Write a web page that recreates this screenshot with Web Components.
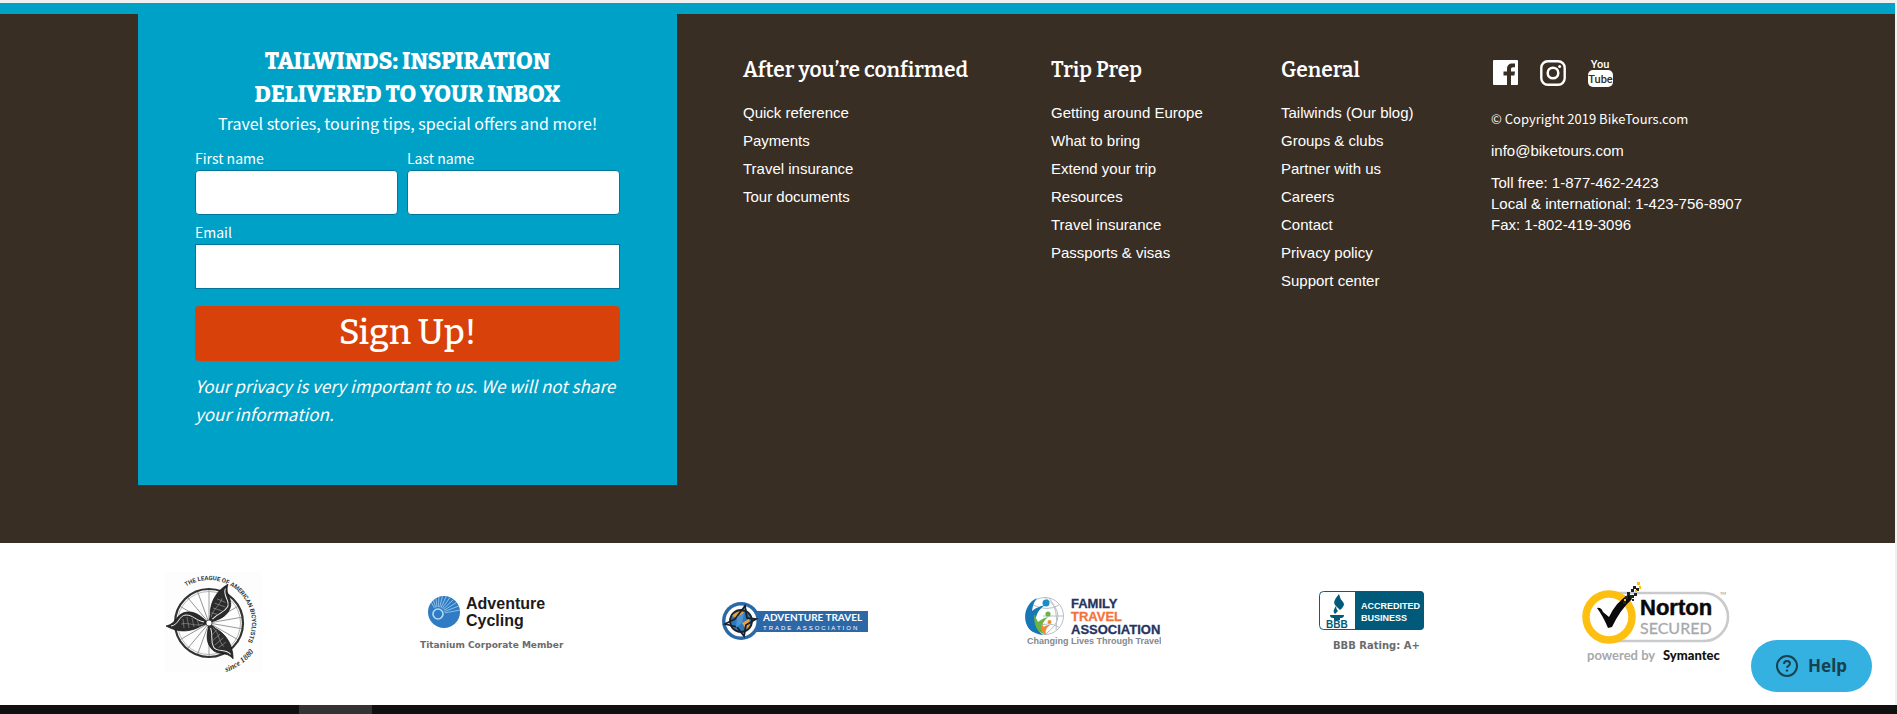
<!DOCTYPE html>
<html lang="en">
<head>
<meta charset="utf-8">
<title>BikeTours.com</title>
<style>
  body { margin: 0; font-family: "Liberation Sans", Arial, sans-serif; background: #fff; }
</style>
</head>
<body>
<bt-page>
  <bt-signup slot="signup"></bt-signup>
  <bt-links slot="links" heading="After you’re confirmed">
    <a href="#quick">Quick reference</a><a href="#payments">Payments</a><a href="#insurance">Travel insurance</a><a href="#documents">Tour documents</a>
  </bt-links>
  <bt-links slot="links" heading="Trip Prep">
    <a href="#europe">Getting around Europe</a><a href="#bring">What to bring</a><a href="#extend">Extend your trip</a><a href="#resources">Resources</a><a href="#insurance">Travel insurance</a><a href="#visas">Passports &amp; visas</a>
  </bt-links>
  <bt-links slot="links" heading="General">
    <a href="#blog">Tailwinds (Our blog)</a><a href="#groups">Groups &amp; clubs</a><a href="#partner">Partner with us</a><a href="#careers">Careers</a><a href="#contact">Contact</a><a href="#privacy">Privacy policy</a><a href="#support">Support center</a>
  </bt-links>
  <bt-contact slot="links"></bt-contact>
  <bt-badges slot="badges"></bt-badges>
</bt-page>
<bt-help></bt-help>

<script>
const define = (name, html, setup) => {
  const template = document.createElement('template');
  template.innerHTML = html;
  customElements.define(name, class extends HTMLElement {
    constructor() {
      super();
      this.attachShadow({ mode: 'open' }).append(template.content.cloneNode(true));
    }
    connectedCallback() { if (setup) setup(this, this.shadowRoot); }
  });
};

define('bt-page', `
  <style>
    :host { display: block; }
    .top { height: 3px; background: #f0f0f0; }
    .view { border-right: 2px solid #f0f0f0; }
    .band { height: 11px; background: #00a1c7; }
    footer { background: #392e24; padding-bottom: 58px; display: grid; align-items: start;
      grid-template-columns: 138fr 539fr 66fr 308fr 230fr 210fr 404fr; }
    ::slotted(*) { min-width: 0; }
    ::slotted(bt-signup) { grid-column: 2; }
    .gap { grid-column: 3; }
    .taskbar { height: 9px; background: #101010; display: flex; padding-left: 299px; }
    .taskbar span { width: 73px; background: #333; }
  </style>
  <div class="top"></div>
  <div class="view">
    <div class="band"></div>
    <footer><slot name="signup"></slot><div class="gap"></div><slot name="links"></slot></footer>
    <slot name="badges"></slot>
  </div>
  <div class="taskbar"><span></span></div>
`);

define('bt-signup', `
  <style>
    :host { display: block; background: #00a1c7; color: #fff; padding: 31px 57px 57px;
      font: 16px/24px "Noto Sans CJK SC", "Open Sans", sans-serif; }
    h2 { margin: 0; font: 800 23px/33px Bitter, "DejaVu Serif", serif; text-align: center; text-transform: uppercase; }
    .lead { margin: 0 0 13px; text-align: center; }
    .names { display: grid; grid-template-columns: 203fr 213fr; gap: 9px; margin-bottom: 7px; }
    label { display: block; font-size: 14px; line-height: 20px; margin-bottom: 2px; }
    input { display: block; box-sizing: border-box; width: 100%; height: 45px; margin: 0; padding: 0 10px;
      border: 1px solid #02769a; border-radius: 4px; background: #fff; font: inherit; }
    #email { border-radius: 0; }
    button { display: block; width: 100%; height: 55px; margin: 17px 0 11px; padding: 0 0 3px; border: 0; border-radius: 4px;
      background: #d8420a; color: #fff; font: 500 35px/51px Bitter, "DejaVu Serif", serif; }
    .note { margin: 0; font-size: 17px; line-height: 28px; font-style: italic; }
  </style>
  <h2>Tailwinds: Inspiration<br>delivered to your inbox</h2>
  <p class="lead">Travel stories, touring tips, special offers and more!</p>
  <form>
    <div class="names">
      <div><label for="first">First name</label><input id="first" type="text"></div>
      <div><label for="last">Last name</label><input id="last" type="text"></div>
    </div>
    <label for="email">Email</label><input id="email" type="email">
    <button type="button">Sign Up!</button>
  </form>
  <p class="note">Your privacy is very important to us. We will not share your information.</p>
`);

define('bt-links', `
  <style>
    :host { display: block; padding-top: 42px; color: #fff; }
    h3 { margin: 0 0 15px; font: 600 21px/28px Bitter, "DejaVu Serif", serif; white-space: nowrap; }
    nav { display: flex; flex-direction: column; align-items: flex-start; }
    ::slotted(a) { color: #fff; text-decoration: none; font-size: 15px; line-height: 28px; }
  </style>
  <h3></h3>
  <nav><slot></slot></nav>
`, (host, root) => { root.querySelector('h3').textContent = host.getAttribute('heading'); });

define('bt-contact', `
  <style>
    :host { display: block; padding-top: 44px; color: #fff; font-size: 15px; line-height: 21px; }
    a { color: #fff; text-decoration: none; }
    .social { display: flex; gap: 20px; margin-bottom: 20px; }
    .social a, svg { display: block; width: 28px; height: 30px; }
    p { margin: 0 0 11px; white-space: nowrap; }
    .copy { font-family: "Noto Sans CJK SC", "Open Sans", sans-serif; font-size: 13px; }
  </style>
  <div class="social">
    <a href="#facebook" aria-label="Facebook"><svg viewBox="0 0 28 30"><rect x="2" y="2" width="25" height="25" rx="1" fill="#fff"/><path d="M16 27V17.500h-3.500v-4H16V11c0-3.600 2-5.500 5.300-5.500H24v3.700h-1.800c-1.700 0-2.200.8-2.200 2.200v2.100h4l-.6 4H20V27z" fill="#392e24"/></svg></a>
    <a href="#instagram" aria-label="Instagram"><svg viewBox="0 0 28 30" fill="none" stroke="#fff"><rect x="2.300" y="3.300" width="23.400" height="23.400" rx="6.500" stroke-width="2.400"/><circle cx="14" cy="15" r="5.300" stroke-width="2.500"/><circle cx="20.600" cy="8.600" r="1.500" fill="#fff" stroke="none"/></svg></a>
    <a href="#youtube" aria-label="YouTube"><svg viewBox="0 0 28 30" font-family="Roboto, sans-serif" font-weight="500" text-anchor="middle"><text x="13" y="10" font-size="11" fill="#fff">You</text><rect x="1" y="12" width="25" height="17" rx="5" fill="#fff"/><text x="13.500" y="25" font-size="11" fill="#392e24">Tube</text></svg></a>
  </div>
  <p class="copy">© Copyright 2019 BikeTours.com</p>
  <p><a href="mailto:info@biketours.com">info@biketours.com</a></p>
  <p>Toll free: 1-877-462-2423<br>Local &amp; international: 1-423-756-8907<br>Fax: 1-802-419-3096</p>
`);

const spokes = Array.from({ length: 18 }, (_, i) => `<path d="M0 0V-33" transform="rotate(${i * 20})"/>`).join('');
const rays = Array.from({ length: 11 }, (_, i) => `<path d="M0 0L30 0" transform="rotate(${-120 + i * 11})"/>`).join('');
define('bt-badges', `
  <style>
    :host { display: flex; justify-content: space-between; align-items: center; background: #fff; padding: 27px 8.7%; }
    svg { display: block; height: 108px; flex: none; font-family: "Liberation Sans", sans-serif; }
  </style>
  <svg width="97" viewBox="0 0 97 108" role="img" aria-label="The League of American Bicyclists">
    <defs>
      <path id="arc" d="M21.200 16.500A43 43 0 0 1 82 73"/>
      <path id="low" d="M61 102Q79 96 92 78"/>
      <path id="wing" d="M0 0C-5-3-11-12-22-11S-32 1-43 3C-29 11-16 8-8 3Z"/>
    </defs>
    <rect y="2" width="97" height="100" fill="#fdfdfd"/>
    <g transform="translate(44 53)" fill="none" stroke="#777" stroke-width=".7">${spokes}
      <circle r="34" stroke="#333" stroke-width="2.200"/><circle r="31.500" stroke="#999" stroke-width=".7"/>
      <g fill="#2b2b2b" stroke="#111">
        ${[0, 120, 240].map(a => `<g transform="rotate(${a})"><use href="#wing"/><path d="M-5-1C-14-3-16-8-23-8S-30 2-38 3" stroke="#eee" stroke-width="1"/><path d="M-10 3l-2-7M-15 4l-2-9M-20 5l-2-11M-25 5l-1-9M-6 1C-15 4-19-1-28 1" stroke="#999" stroke-width=".6"/></g>`).join('')}
      </g>
      <circle r="3" fill="#fff" stroke="#222"/>
    </g>
    <text font-family="Roboto, sans-serif" font-size="6" font-weight="bold" fill="#333"><textPath href="#arc">THE LEAGUE OF AMERICAN BICYCLISTS</textPath></text>
    <text font-family="Liberation Serif, serif" font-size="8" font-weight="bold" font-style="italic" fill="#333"><textPath href="#low">since 1880</textPath></text>
  </svg>

  <svg width="145" viewBox="0 0 145 108" role="img" aria-label="Adventure Cycling">
    <clipPath id="ball"><circle cx="25" cy="42" r="16"/></clipPath>
    <circle cx="25" cy="42" r="16" fill="#2f7cc4"/>
    <g clip-path="url(#ball)"><g transform="translate(19 44)" stroke="#9cc9ec" stroke-width=".8">${rays}</g><circle cx="19" cy="44" r="7" fill="#2f7cc4"/></g>
    <circle cx="19" cy="44" r="5" fill="none" stroke="#b5daf3" stroke-width="1.600"/>
    <g font-size="16" font-weight="bold" fill="#1b1b1b"><text x="47" y="39">Adventure</text><text x="47" y="56">Cycling</text></g>
    <text x="1" y="78" font-family="DejaVu Sans, sans-serif" font-size="9" font-weight="bold" fill="#6b6b6b">Titanium Corporate Member</text>
  </svg>

  <svg width="146" viewBox="0 0 146 108" role="img" aria-label="Adventure Travel Trade Association">
    <rect x="30" y="41" width="116" height="21" fill="#2c68a8"/>
    <circle cx="19" cy="51" r="19" fill="#2c68a8"/><circle cx="19" cy="51" r="15.500" fill="#fff"/>
    <circle cx="19" cy="51" r="11" fill="#2f78bd" stroke="#222" stroke-width="1.800"/>
    <path d="M10 46q5-6 12-4l-5 7zM20 53l7-4q3 7-3 10z" fill="#f0a23c"/>
    <path d="M23 36l2 12 9 1-10 6-2 11-7-9-12-3 10-5z" fill="none" stroke="#18222e" stroke-width="1.800"/>
    <path d="M15 47l7-4-2 10-6 5z" fill="#4c94d2"/>
    <g fill="#fff"><text x="41" y="51" font-family="Lato, sans-serif" font-size="10" font-weight="bold">ADVENTURE TRAVEL</text>
    <text x="41" y="60" font-size="6" style="letter-spacing:2px">TRADE ASSOCIATION</text></g>
  </svg>

  <svg width="136" viewBox="0 0 136 108" role="img" aria-label="Family Travel Association">
    <g fill="none" stroke="#b8bec4" stroke-width="1"><circle cx="20" cy="46" r="18.500"/><path d="M20 27.500Q46 46 20 64.500M24 28Q34 39 31 60M8 35q14 7 26 0M18 46h20M10 57q13-6 24 0"/></g>
    <path d="M12 28C-2 34-4 55 8 62c4 2 8 3 10 3C8 57 8 43 20 35c-7 2-9 3-13 6 1-6 2-9 5-13z" fill="#1776b5"/>
    <circle cx="21" cy="33" r="3.500" fill="#1c8cc8"/>
    <path d="M9 44c0 12 3 18 10 20-4-6-2-12 4-17-5 1-7 3-10 5z" fill="#6bb344"/><circle cx="23" cy="44" r="2.600" fill="#6bb344"/>
    <path d="M16 53c0 6 1 10 5 12-1-4 0-7 4-10-4 0-5 1-6 2z" fill="#f08a32"/><circle cx="24.500" cy="52" r="2" fill="#f08a32"/>
    <g font-size="13" font-weight="bold" fill="#26345e" stroke="#26345e" stroke-width=".3"><text x="46" y="38">FAMILY</text><text x="46" y="51" fill="#f4733a" stroke="#f4733a">TRAVEL</text><text x="46" y="64">ASSOCIATION</text></g>
    <text x="2" y="74" font-size="9" font-weight="bold" fill="#85888c">Changing Lives Through Travel</text>
  </svg>

  <svg width="106" viewBox="0 0 106 108" role="img" aria-label="BBB Accredited Business">
    <rect x=".5" y="21.500" width="104" height="38" rx="4" fill="#fff" stroke="#0b5d7d"/>
    <path d="M36 21h65q4 0 4 4v31q0 4-4 4H36z" fill="#025a7a"/>
    <path d="M20 24q1 5 4 8 3 3-3 8l-5-5q-3-3 4-11zM17 36q0 3 2 5l-3 3q-3-3 1-8zM11 45h14q0 3-3 3h-8q-3 0-3-3zM15 48h6v2h-6z" fill="#025a7a"/>
    <text x="7" y="58" font-size="10" font-weight="bold" fill="#025a7a">BBB</text>
    <g font-size="9" font-weight="bold" fill="#fff"><text x="42" y="39">ACCREDITED</text><text x="42" y="51">BUSINESS</text></g>
    <text x="14" y="79" font-family="DejaVu Sans, sans-serif" font-size="10" font-weight="bold" fill="#6b6b6b">BBB Rating: A+</text>
  </svg>

  <svg width="148" viewBox="0 0 148 108" role="img" aria-label="Norton Secured, powered by Symantec">
    <rect x="10" y="23" width="136" height="48" rx="24" fill="#fff" stroke="#c9cacc" stroke-width="2.600"/>
    <circle cx="27" cy="47" r="23" fill="#fff" stroke="#fdc010" stroke-width="7.500"/>
    <path d="M15 38q4-1 6 4l6 5Q34 32 47 24l3 5Q38 40 30 57l-4 1Q21 46 15 38z" fill="#0a0a0a"/>
    <path d="M45 22h3v3h-3zM49 19h3v3h-3zM52 23h3v3h-3zM48 25h4v3h-4zM51 16h3v3h-3zM54 18h3v3h-3zM43 26h3v3h-3zM41 31h3v3h-3zM50 29h2v2h-2z" fill="#222"/>
    <path d="M55 12h3v3h-3zM57 16h2v3h-2zM53 20h2v2h-2zM42 29h2v2h-2z" fill="#fdc010"/>
    <text x="58" y="45" font-size="22" font-weight="bold" fill="#0a0a0a" stroke="#0a0a0a" stroke-width=".5">Norton</text>
    <g font-family="Lato, sans-serif"><text x="58" y="64" font-size="16" fill="#a7a9ac" stroke="#a7a9ac" stroke-width=".3">SECURED</text>
    <text x="5" y="90" font-size="13" font-weight="bold" fill="#a7a9ac">powered by</text><text x="81" y="90" font-size="13" font-weight="900" fill="#111">Symantec</text>
    <text x="138" y="25" font-size="4" fill="#888">TM</text></g>
  </svg>
`);

define('bt-help', `
  <style>
    :host { position: fixed; right: 25px; bottom: 22px; display: block; }
    button { display: flex; align-items: center; justify-content: center; gap: 10px; height: 52px; padding: 0 25px; border: 0; border-radius: 26px;
      background: #34b0e1; color: #17414f; font: bold 17px/24px "Noto Sans", "Open Sans", sans-serif; }
    svg { width: 22px; height: 22px; }
  </style>
  <button type="button"><svg viewBox="0 0 22 22" fill="none" stroke="currentColor" stroke-width="2" aria-hidden="true"><circle cx="11" cy="11" r="10"/><path d="M8 9q0-3 3-3t3 2.800c0 2-3 2-3 4"/><circle cx="11" cy="15.600" r="1.200" fill="currentColor" stroke="none"/></svg>Help</button>
`);
</script>
</body>
</html>
